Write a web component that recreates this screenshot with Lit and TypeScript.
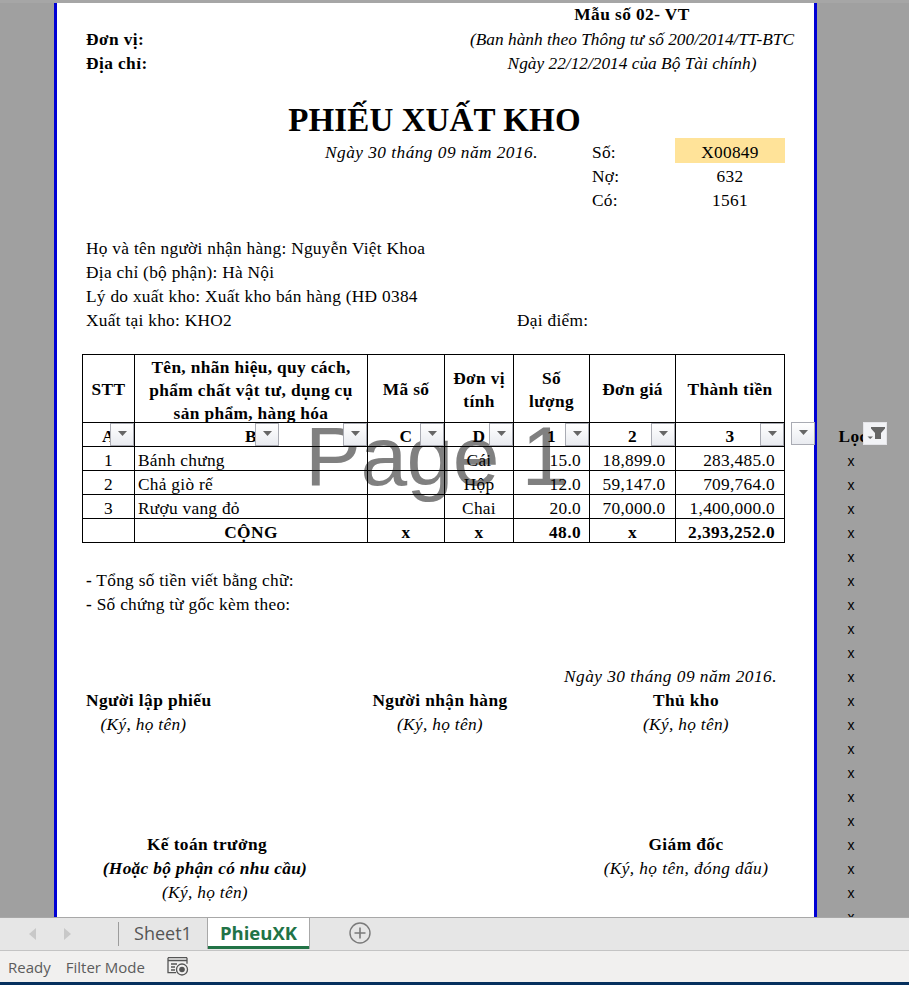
import { LitElement, html, css } from "lit";
import { customElement } from "lit/decorators.js";

const arrow = html`<svg width="9" height="5" viewBox="0 0 9 5"><path d="M0 0h9L4.500 5z" fill="#666"/></svg>`;
const filterBtn = (cls = "") => html`<span class="fbtn ${cls}">${arrow}</span>`;
const activeFilter = html`<span class="fbtn on"><svg width="22" height="21" viewBox="0 0 22 21"><path d="M7 4h14v1.500l-4 4.500v6h-6v-6L7 5.500z" fill="#666"/><path d="M3.500 13.500h5.500l-2.750 2.500z" fill="#666"/></svg></span>`;

@customElement("app-root")
export class AppRoot extends LitElement {
  static styles = css`
    :host { display: block; width: 909px; height: 985px; overflow: hidden; font-family: "Liberation Serif", serif; font-size: 17.33px; color: #000; background: #f1f0ef; letter-spacing: .28px; }
    .b { font-weight: bold; letter-spacing: .42px; }
    .i { font-style: italic; letter-spacing: .3px; }
    .c { text-align: center; }
    .sheet { display: flex; height: 914px; border-top: 3px solid #a6a6a6; overflow: hidden; background: #a0a0a0; }
    .gut-l { width: 54px; flex: none; }
    .page { width: 757px; flex: none; background: #fff; border-left: 3px solid #0000d4; border-right: 3px solid #0000d4; position: relative; }
    .gut-r { flex: 1; padding-top: 419px; display: flex; flex-direction: column; position: relative; }
    .gut-r .x { height: 24px; line-height: 31px; width: 68px; text-align: center; font-family: "Liberation Sans", sans-serif; font-size: 14px; letter-spacing: 0; flex: none; }
    .gut-r .loc { height: 24px; line-height: 29px; width: 68px; padding-left: 4px; box-sizing: border-box; text-align: center; flex: none; }
    .gut-r .fbtn { left: 46px; top: 419px; }
    .r { height: 24px; line-height: 28px; white-space: nowrap; }
    .head { display: grid; grid-template-columns: 393px 1fr; }
    .left { padding: 24px 0 0 29px; }
    .left .r { line-height: 26px; }
    .right { text-align: center; }
    .right .r { line-height: 26px; }
    .right .r:first-child { line-height: 24px; }
    .tight { letter-spacing: 0; }
    .title { height: 39px; margin-top: 24px; text-align: center; font-size: 33px; font-weight: bold; line-height: 42px; letter-spacing: .1px; padding-right: 2px; }
    .dates { display: grid; grid-template-columns: 535px 83px 110px; grid-auto-rows: 24px; height: 72px; }
    .dates > div { line-height: 30px; height: 24px; }
    .dates .d { text-align: right; padding-right: 54px; letter-spacing: .45px; }
    .dates .hl { background: #ffe399; height: 25px; }
    .info { padding-left: 29px; margin-top: 24px; }
    .info .r { line-height: 30px; }
    .two { display: grid; grid-template-columns: 431px 1fr; }
    .tbl { position: relative; z-index: 1; margin: 24px 0 0 25px; }
    table { border-collapse: collapse; table-layout: fixed; width: 702px; }
    col:nth-child(1) { width: 52px; }
    col:nth-child(2) { width: 233px; }
    col:nth-child(3) { width: 77px; }
    col:nth-child(4) { width: 69px; }
    col:nth-child(5) { width: 76px; }
    col:nth-child(6) { width: 86px; }
    col:nth-child(7) { width: 109px; }
    tr { height: 24px; }
    td { border: 1px solid #000; padding: 4px 0 0; line-height: 19px; text-align: center; position: relative; white-space: nowrap; }
    tr.th { height: 68px; }
    tr.th td { padding: 0; font-weight: bold; letter-spacing: .36px; }
    .cell { height: 67px; display: flex; align-items: center; justify-content: center; line-height: 23px; box-sizing: border-box; padding-top: 2px; }
    .cell.three { padding-top: 3px; }
    tr.sub td, tr.tot td { font-weight: bold; letter-spacing: .42px; }
    td.l { text-align: left; padding-left: 3px; }
    td.n { text-align: right; padding-right: 9px; }
    td.q { text-align: right; padding-right: 8px; }
    td.p { padding-left: 3px; }
    .wm { position: absolute; left: 248px; top: 403px; font: 84px/100px "Liberation Sans", sans-serif; color: #808080; letter-spacing: -.6px; white-space: nowrap; }
    .fbtn { position: absolute; width: 22px; height: 21px; top: 0; right: 0; background: linear-gradient(#fff, #e9ebf0); border: 1px solid #a9abb3; display: flex; align-items: center; justify-content: center; z-index: 2; }
    .fbtn svg { display: block; margin-top: -2px; }
    .fbtn.on { background: #f2f3f6; border-color: #e4e4e8; }
    .fbtn.on svg { margin-top: 0; }
    .fbtn.mid { right: 88px; }
    .fbtn.extra { left: 734px; right: auto; top: 419px; }
    .tail { margin: 24px 0 48px; padding-left: 29px; }
    .dash { font-weight: bold; }
    .date2 { text-align: right; padding-right: 37px; letter-spacing: .45px; }
    .sig { display: grid; grid-template-columns: 254px 200px 46px 200px; padding-left: 29px; text-align: center; }
    .sig .first { text-align: left; }
    .sig .k1 { width: 115px; }
    .low { margin-top: 96px; }
    .low .row { display: grid; grid-template-columns: 238px 262px 200px; padding-left: 29px; text-align: center; }
    .low .nudge { padding-left: 4px; }
    .wide { letter-spacing: .4px; }
    .tabs { height: 34px; background: #e6e6e6; border-top: 1px solid #a8a8a8; box-sizing: border-box; display: flex; font-family: "Open Sans", "Liberation Sans", sans-serif; letter-spacing: 0; border-bottom: 1px solid #c4c4c4; }
    .nav { width: 119px; flex: none; display: flex; gap: 28px; align-items: center; padding-left: 29px; box-sizing: border-box; border-right: 1px solid #9c9c9c; margin: 4px 0 4px; }
    .sheet1 { width: 88px; flex: none; display: flex; align-items: center; justify-content: center; font-size: 18px; color: #555; padding-bottom: 2px; box-sizing: border-box; }
    .active { width: 103px; flex: none; margin-top: -1px; background: #fff; border: 1px solid #a8a8a8; border-bottom: 0; box-shadow: inset 0 -3px 0 #217346; display: flex; align-items: center; justify-content: center; color: #217346; font-weight: bold; font-size: 18.5px; padding-bottom: 3px; box-sizing: border-box; height: 32px; }
    .add { margin: 4px 0 0 39px; }
    .status { height: 31px; background: #f1f0ef; display: flex; align-items: center; font-family: "Open Sans", "Liberation Sans", sans-serif; font-size: 15px; letter-spacing: 0; color: #5c5c5c; padding-left: 8px; border-bottom: 3px solid #06305e; }
    .status span + span { margin-left: 15px; }
    .status svg { margin-left: 22px; }
  `;

  render() {
    const rows = Array.from({ length: 20 });
    return html`
      <div class="sheet">
        <div class="gut-l"></div>
        <div class="page">
          <div class="wm">Page 1</div>
          <div class="head">
            <div class="left">
              <div class="r b">Đơn vị:</div>
              <div class="r b">Địa chỉ:</div>
            </div>
            <div class="right">
              <div class="r b">Mẫu số 02- VT</div>
              <div class="r i tight">(Ban hành theo Thông tư số 200/2014/TT-BTC</div>
              <div class="r i tight">Ngày 22/12/2014 của Bộ Tài chính)</div>
            </div>
          </div>
          <div class="title">PHIẾU XUẤT KHO</div>
          <div class="dates">
            <div class="i d">Ngày 30 tháng 09 năm 2016.</div>
            <div>Số:</div>
            <div class="hl c">X00849</div>
            <div></div><div>Nợ:</div><div class="c">632</div>
            <div></div><div>Có:</div><div class="c">1561</div>
          </div>
          <div class="info">
            <div class="r">Họ và tên người nhận hàng: Nguyễn Việt Khoa</div>
            <div class="r">Địa chỉ (bộ phận): Hà Nội</div>
            <div class="r">Lý do xuất kho: Xuất kho bán hàng (HĐ 0384</div>
            <div class="r two"><span>Xuất tại kho: KHO2</span><span>Đại điểm:</span></div>
          </div>
          <div class="tbl">
            <table>
              <colgroup><col/><col/><col/><col/><col/><col/><col/></colgroup>
              <tr class="th">
                <td><div class="cell">STT</div></td>
                <td><div class="cell three"><span>Tên, nhãn hiệu, quy cách,<br/>phẩm chất vật tư, dụng cụ<br/>sản phẩm, hàng hóa</span></div></td>
                <td><div class="cell">Mã số</div></td>
                <td><div class="cell"><span>Đơn vị<br/>tính</span></div></td>
                <td><div class="cell"><span>Số<br/>lượng</span></div></td>
                <td><div class="cell">Đơn giá</div></td>
                <td><div class="cell">Thành tiền</div></td>
              </tr>
              <tr class="sub">
                <td>A${filterBtn()}</td>
                <td>B${filterBtn("mid")}${filterBtn()}</td>
                <td>C${filterBtn()}</td>
                <td>D${filterBtn()}</td>
                <td>1${filterBtn()}</td>
                <td>2${filterBtn()}</td>
                <td>3${filterBtn()}</td>
              </tr>
              <tr><td>1</td><td class="l">Bánh chưng</td><td></td><td>Cái</td><td class="q">15.0</td><td class="p">18,899.0</td><td class="n">283,485.0</td></tr>
              <tr><td>2</td><td class="l">Chả giò rế</td><td></td><td>Hộp</td><td class="q">12.0</td><td class="p">59,147.0</td><td class="n">709,764.0</td></tr>
              <tr><td>3</td><td class="l">Rượu vang đỏ</td><td></td><td>Chai</td><td class="q">20.0</td><td class="p">70,000.0</td><td class="n">1,400,000.0</td></tr>
              <tr class="tot"><td></td><td>CỘNG</td><td>x</td><td>x</td><td class="q">48.0</td><td>x</td><td class="n">2,393,252.0</td></tr>
            </table>
          </div>
          ${filterBtn("extra")}
          <div class="tail">
            <div class="r"><span class="dash">-</span> Tổng số tiền viết bằng chữ:</div>
            <div class="r"><span class="dash">-</span> Số chứng từ gốc kèm theo:</div>
          </div>
          <div class="r date2 i">Ngày 30 tháng 09 năm 2016.</div>
          <div class="r sig b">
            <span class="first">Người lập phiếu</span><span>Người nhận hàng</span><span></span><span>Thủ kho</span>
          </div>
          <div class="r sig i">
            <span class="k1">(Ký, họ tên)</span><span>(Ký, họ tên)</span><span></span><span>(Ký, họ tên)</span>
          </div>
          <div class="low">
            <div class="r row b"><span class="nudge">Kế toán trưởng</span><span></span><span>Giám đốc</span></div>
            <div class="r row i wide"><span class="b i">(Hoặc bộ phận có nhu cầu)</span><span></span><span>(Ký, họ tên, đóng dấu)</span></div>
            <div class="r row i"><span>(Ký, họ tên)</span></div>
          </div>
        </div>
        <div class="gut-r">
          <div class="loc b">Lọc</div>
          ${activeFilter}
          ${rows.map(() => html`<div class="x">x</div>`)}
        </div>
      </div>
      <div class="tabs">
        <div class="nav">
          <svg width="7" height="12" viewBox="0 0 7 12"><path d="M7 0v12L0 6z" fill="#c8c8c8"/></svg>
          <svg width="7" height="12" viewBox="0 0 7 12"><path d="M0 0v12l7-6z" fill="#c8c8c8"/></svg>
        </div>
        <div class="sheet1">Sheet1</div>
        <div class="active">PhieuXK</div>
        <svg class="add" width="22" height="22" viewBox="0 0 22 22"><circle cx="11" cy="11" r="10" fill="none" stroke="#7a7a7a" stroke-width="1.4"/><path d="M11 5.500v11M5.500 11h11" stroke="#7a7a7a" stroke-width="1.6"/></svg>
      </div>
      <div class="status">
        <span>Ready</span><span>Filter Mode</span>
        <svg width="22" height="19" viewBox="0 0 22 19"><path d="M1 .7h19M1 3.500h19M1 .7v15h8M20 .7v6" fill="none" stroke="#555" stroke-width="1.3"/><path d="M4 7h6M4 10h4M4 13h4" stroke="#555" stroke-width="1.3"/><circle cx="15" cy="12.500" r="5.500" fill="#f1f0ef" stroke="#555" stroke-width="1.3"/><circle cx="15" cy="12.500" r="2.800" fill="#555"/></svg>
      </div>
    `;
  }
}
